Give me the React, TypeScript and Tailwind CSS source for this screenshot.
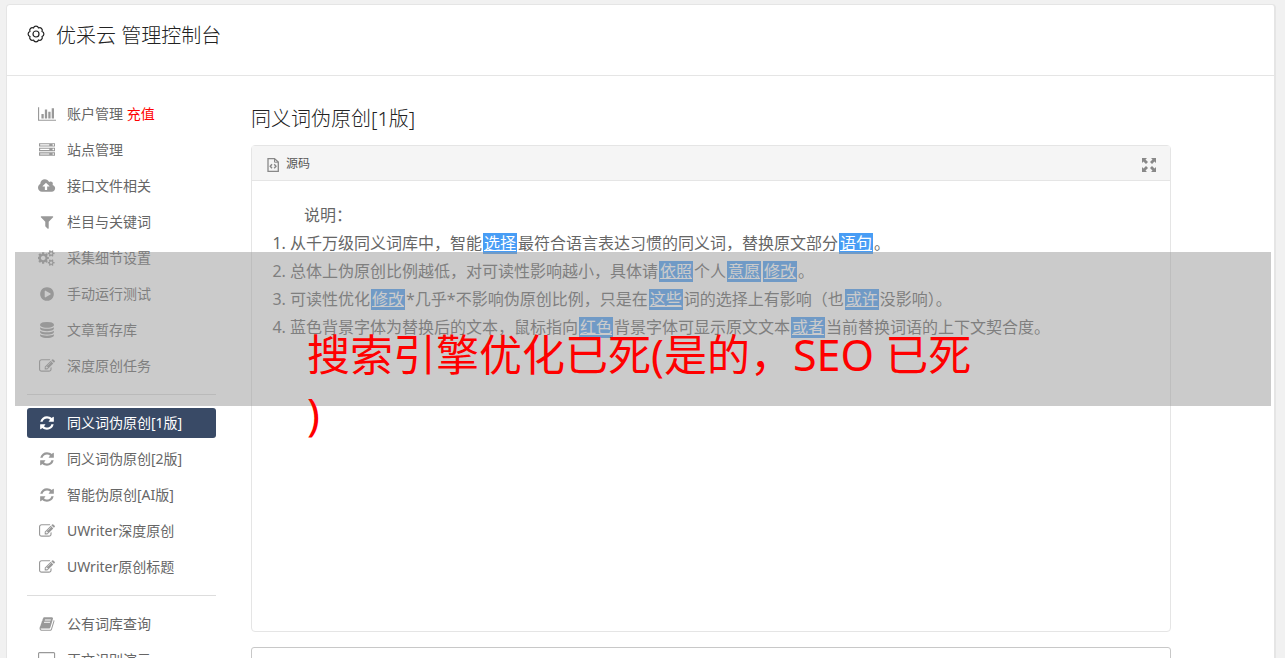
import type { ReactNode } from 'react';

// [viewBox width, path] on a 1792 unit high grid
const ICONS = {
  chart: [2048, 'M640 896v512h-256v-512h256zm384-512v1024h-256v-1024h256zm1024 1152v128h-2048v-1536h128v1408h1920zm-640-896v768h-256v-768h256zm384-384v1152h-256v-1152h256z'],
  server: [1792, 'M128 1408h1024v-128h-1024v128zm0-512h1024v-128h-1024v128zm1568 448q0-40-28-68t-68-28-68 28-28 68 28 68 68 28 68-28 28-68zm-1568-960h1024v-128h-1024v128zm1568 448q0-40-28-68t-68-28-68 28-28 68 28 68 68 28 68-28 28-68zm0-512q0-40-28-68t-68-28-68 28-28 68 28 68 68 28 68-28 28-68zm96 832v384h-1792v-384h1792zm0-512v384h-1792v-384h1792zm0-512v384h-1792v-384h1792z'],
  cloud: [1920, 'M1280 928q0-14-9-23l-352-352q-9-9-23-9t-23 9l-351 351q-10 12-10 24 0 14 9 23t23 9h224v352q0 13 9.5 22.5t22.5 9.5h192q13 0 22.5-9.5t9.5-22.5v-352h224q13 0 22.5-9.5t9.5-22.5zm640 224q0 159-112.5 271.5t-271.5 112.5h-1088q-185 0-316.5-131.5t-131.5-316.5q0-130 70-240t188-165q-2-30-2-43 0-212 150-362t362-150q156 0 285.5 87t188.5 231q71-62 166-62 106 0 181 75t75 181q0 76-41 138 130 31 213.5 135.5t83.5 238.5z'],
  filter: [1792, 'M1595 295q17 41-14 70l-493 493v742q0 42-39 59-13 5-25 5-27 0-45-19l-256-256q-19-19-19-45v-486l-493-493q-31-29-14-70 17-39 59-39h1280q42 0 59 39z'],
  cogs: [1920, 'M832 896q0-106-75-181t-181-75-181 75-75 181 75 181 181 75 181-75 75-181zm768 512q0-52-38-90t-90-38-90 38-38 90q0 53 37.5 90.5t90.5 37.5 90.5-37.5 37.5-90.5zm0-1024q0-52-38-90t-90-38-90 38-38 90q0 53 37.5 90.5t90.5 37.5 90.5-37.5 37.5-90.5zm-384 421v185q0 10-7 19.5t-16 10.5l-155 24q-11 35-32 76 34 48 90 115 7 11 7 20 0 12-7 19-23 30-82.5 89.5t-78.5 59.5q-11 0-21-7l-115-90q-37 19-77 31-11 108-23 155-7 24-30 24h-186q-11 0-20-7.5t-10-17.5l-23-153q-34-10-75-31l-118 89q-7 7-20 7-11 0-21-8-144-133-144-160 0-9 7-19 10-14 41-53t47-61q-23-44-35-82l-152-24q-10-1-17-9.5t-7-19.5v-185q0-10 7-19.5t16-10.5l155-24q11-35 32-76-34-48-90-115-7-11-7-20 0-12 7-20 22-30 82-89t79-59q11 0 21 7l115 90q34-18 77-32 11-108 23-154 7-24 30-24h186q11 0 20 7.5t10 17.5l23 153q34 10 75 31l118-89q8-7 20-7 11 0 21 8 144 133 144 160 0 8-7 19-12 16-42 54t-45 60q23 48 34 82l152 23q10 2 17 10.5t7 19.5zm640 533v140q0 16-149 31-12 27-30 52 51 113 51 138 0 4-4 7-122 71-124 71-8 0-46-47t-52-68q-20 2-30 2t-30-2q-14 21-52 68t-46 47q-2 0-124-71-4-3-4-7 0-25 51-138-18-25-30-52-149-15-149-31v-140q0-16 149-31 13-29 30-52-51-113-51-138 0-4 4-7 4-2 35-20t59-34 30-16q8 0 46 46.5t52 67.5q20-2 30-2t30 2q51-71 92-112l6-2q4 0 124 70 4 3 4 7 0 25-51 138 17 23 30 52 149 15 149 31zm0-1024v140q0 16-149 31-12 27-30 52 51 113 51 138 0 4-4 7-122 71-124 71-8 0-46-47t-52-68q-20 2-30 2t-30-2q-14 21-52 68t-46 47q-2 0-124-71-4-3-4-7 0-25 51-138-18-25-30-52-149-15-149-31v-140q0-16 149-31 13-29 30-52-51-113-51-138 0-4 4-7 4-2 35-20t59-34 30-16q8 0 46 46.5t52 67.5q20-2 30-2t30 2q51-71 92-112l6-2q4 0 124 70 4 3 4 7 0 25-51 138 17 23 30 52 149 15 149 31z'],
  play: [1792, 'M896 128q209 0 385.5 103t279.5 279.5 103 385.5-103 385.5-279.5 279.5-385.5 103-385.5-103-279.5-279.5-103-385.5 103-385.5 279.5-279.5 385.5-103zm384 823q32-18 32-55t-32-55l-544-320q-31-19-64-1-32 19-32 56v640q0 37 32 56 16 8 32 8 17 0 32-9z'],
  database: [1792, 'M896 768q237 0 443-43t325-127v170q0 69-103 128t-280 93.5-385 34.5-385-34.5-280-93.5-103-128v-170q119 84 325 127t443 43zm0 768q237 0 443-43t325-127v170q0 69-103 128t-280 93.5-385 34.5-385-34.5-280-93.5-103-128v-170q119 84 325 127t443 43zm0-384q237 0 443-43t325-127v170q0 69-103 128t-280 93.5-385 34.5-385-34.5-280-93.5-103-128v-170q119 84 325 127t443 43zm0-1152q208 0 385 34.5t280 93.5 103 128v128q0 69-103 128t-280 93.5-385 34.5-385-34.5-280-93.5-103-128v-128q0-69 103-128t280-93.5 385-34.5z'],
  edit: [1792, 'M888 1184l116-116-152-152-116 116v56h96v96h56zm440-720q-16-16-33 1l-350 350q-17 17-1 33t33-1l350-350q17-17 1-33zm80 594v190q0 119-84.5 203.5t-203.5 84.5h-832q-119 0-203.5-84.5t-84.5-203.5v-832q0-119 84.5-203.5t203.5-84.5h832q63 0 117 25 15 7 18 23 3 17-9 29l-49 49q-14 14-32 8-23-6-45-6h-832q-66 0-113 47t-47 113v832q0 66 47 113t113 47h832q66 0 113-47t47-113v-126q0-13 9-22l64-64q15-15 35-7t20 29zm-96-738l288 288-672 672h-288v-288zm444 132l-92 92-288-288 92-92q28-28 68-28t68 28l152 152q28 28 28 68t-28 68z'],
  refresh: [1792, 'M1639 1056q0 5-1 7-64 268-268 434.5t-478 166.5q-146 0-282.5-55t-243.5-157l-129 129q-19 19-45 19t-45-19-19-45v-448q0-26 19-45t45-19h448q26 0 45 19t19 45-19 45l-137 137q71 66 161 102t187 36q134 0 250-65t186-179q11-17 53-117 8-23 30-23h192q13 0 22.5 9.5t9.5 22.5zm25-800v448q0 26-19 45t-45 19h-448q-26 0-45-19t-19-45 19-45l138-138q-148-137-349-137-134 0-250 65t-186 179q-11 17-53 117-8 23-30 23h-199q-13 0-22.5-9.5t-9.5-22.5v-7q65-268 270-434.5t480-166.5q146 0 284 55.5t245 156.5l130-129q19-19 45-19t45 19 19 45z'],
  book: [1792, 'M1703 478q40 57 18 129l-275 906q-19 64-76.5 107.5t-122.5 43.5h-923q-77 0-148.5-53.5t-99.5-131.5q-24-67-2-127 0-4 3-27t4-37q1-8-3-21.5t-3-19.5q2-11 8-21t16.5-23.5 16.5-23.5q23-38 45-91.5t30-91.5q3-10 .5-30t-.5-28q3-11 17-28t17-23q21-36 42-92t25-90q1-9-2.5-32t.5-28q4-13 22-30.5t22-22.5q19-26 42.5-84.5t27.5-96.5q1-8-3-25.5t-2-26.5q2-8 9-18t18-23 17-21q8-12 16.5-30.5t15-35 16-36 19.5-32 26.5-23.5 36-11.5 47.5 5.5l-1 3q38-9 51-9h761q74 0 114 56t18 130l-274 906q-36 119-71.5 153.5t-128.5 34.5h-869q-27 0-38 15-11 16-1 43 24 70 144 70h923q29 0 56-15.5t35-41.5l300-987q7-22 5-57 38 15 59 43zm-1064 2q-4 13 2 22.5t20 9.5h608q13 0 25.5-9.5t16.5-22.5l21-64q4-13-2-22.5t-20-9.5h-608q-13 0-25.5 9.5t-16.5 22.5zm-83 256q-4 13 2 22.5t20 9.5h608q13 0 25.5-9.5t16.5-22.5l21-64q4-13-2-22.5t-20-9.5h-608q-13 0-25.5 9.5t-16.5 22.5z'],
  desktop: [1920, 'M1792 992v-832q0-13-9.500-22.500t-22.500-9.500h-1600q-13 0-22.500 9.500t-9.500 22.500v832q0 13 9.500 22.500t22.500 9.500h1600q13 0 22.500-9.500t9.500-22.500zm128-832v1088q0 66-47 113t-113 47h-544q0 37 16 77.500t32 71 16 43.500q0 26-19 45t-45 19h-512q-26 0-45-19t-19-45q0-14 16-44t32-70 16-78h-544q-66 0-113-47t-47-113v-1088q0-66 47-113t113-47h1600q66 0 113 47t47 113z'],
} as const;

type IconName = keyof typeof ICONS;

interface NavItem {
  icon: IconName;
  label: string;
  extra?: string;
  active?: boolean;
}

const NAV: NavItem[][] = [
  [
    { icon: 'chart', label: '账户管理', extra: '充值' },
    { icon: 'server', label: '站点管理' },
    { icon: 'cloud', label: '接口文件相关' },
    { icon: 'filter', label: '栏目与关键词' },
    { icon: 'cogs', label: '采集细节设置' },
    { icon: 'play', label: '手动运行测试' },
    { icon: 'database', label: '文章暂存库' },
    { icon: 'edit', label: '深度原创任务' },
  ],
  [
    { icon: 'refresh', label: '同义词伪原创[1版]', active: true },
    { icon: 'refresh', label: '同义词伪原创[2版]' },
    { icon: 'refresh', label: '智能伪原创[AI版]' },
    { icon: 'edit', label: 'UWriter深度原创' },
    { icon: 'edit', label: 'UWriter原创标题' },
  ],
  [
    { icon: 'book', label: '公有词库查询' },
    { icon: 'desktop', label: '正文识别演示' },
  ],
];

function NavIcon({ name }: { name: IconName }) {
  const [width, d] = ICONS[name];
  return (
    <svg viewBox={`0 0 ${width} 1792`} className="h-4 w-auto" fill="currentColor" aria-hidden="true">
      <path d={d} />
    </svg>
  );
}

function Sidebar() {
  return (
    <nav className="w-[189px] shrink-0 pt-[23px]">
      {NAV.map((group, i) => (
        <ul
          key={i}
          className={`flex flex-col gap-1.5 ${i > 0 ? 'mt-[13px] border-t border-[#ddd] pt-[13px]' : ''}`}
        >
          {group.map((item) => (
            <li key={item.label}>
              <a
                href="#"
                className={`flex h-[30px] items-center rounded-[3px] text-sm ${
                  item.active ? 'bg-[#394a66] text-white' : 'text-[#666]'
                }`}
              >
                <span
                  className={`flex w-10 shrink-0 justify-center ${item.active ? 'text-white' : 'text-[#999]'}`}
                >
                  <NavIcon name={item.icon} />
                </span>
                <span>
                  {item.label}
                  {item.extra && <span className="text-[#f00]"> {item.extra}</span>}
                </span>
              </a>
            </li>
          ))}
        </ul>
      ))}
    </nav>
  );
}

function Word({ children }: { children: ReactNode }) {
  return (
    <a href="#" className="mx-px inline-block bg-[#489df5] px-px leading-[21px] text-white underline">
      {children}
    </a>
  );
}

function Editor() {
  return (
    <section className="flex h-[487px] flex-col rounded-[4px] border border-[#e5e5e5]">
      <div className="flex h-[35px] items-center justify-between border-b border-[#e5e5e5] bg-[#f5f5f5] px-[14px] pt-0.5">
        <button type="button" className="flex items-center gap-[7px] text-xs text-[#555]">
          <svg width="13" height="14" viewBox="0 0 13 14" fill="none" stroke="#888" className="mt-0.5" aria-hidden="true">
            <path strokeWidth="1.300" d="M2 .7h6.500L12.300 4v9.300H2z" />
            <path d="M8.500 1v3.200H12" />
            <path strokeWidth="1.400" d="M6 6.200L4.200 8.200 6 10.200M8.200 6.200l1.800 2-1.800 2" />
          </svg>
          源码
        </button>
        <button type="button" aria-label="全屏">
          <svg width="14" height="14" viewBox="0 0 14 14" fill="#888" className="mt-0.5" aria-hidden="true">
            <path d="M0 0h5L3.500 1.500 6 4 4 6 1.500 3.500 0 5zM14 0v5l-1.500-1.500L10 6 8 4l2.500-2.500L9 0zM0 14V9l1.500 1.500L4 8l2 2-2.500 2.500L5 14zM14 14H9l1.500-1.500L8 10l2-2 2.500 2.500L14 9z" />
          </svg>
        </button>
      </div>
      <div className="flex-1 px-5 pt-5 text-base leading-[28px] text-[#666]">
        <p className="indent-8">说明：</p>
        <ol className="list-decimal pl-[18px]">
          <li className="h-7">
            从千万级同义词库中，智能<Word>选择</Word>最符合语言表达习惯的同义词，替换原文部分<Word>语句</Word>。
          </li>
          <li className="h-7">
            总体上伪原创比例越低，对可读性影响越小，具体请<Word>依照</Word>个人<Word>意愿</Word>
            <Word>修改</Word>。
          </li>
          <li className="h-7">
            可读性优化<Word>修改</Word>*几乎*不影响伪原创比例，只是在<Word>这些</Word>词的选择上有影响（也
            <Word>或许</Word>没影响）。
          </li>
          <li className="h-7">
            蓝色背景字体为替换后的文本，鼠标指向<Word>红色</Word>背景字体可显示原文文本<Word>或者</Word>
            当前替换词语的上下文契合度。
          </li>
        </ol>
      </div>
    </section>
  );
}

export default function App() {
  return (
    <div className="relative h-screen overflow-hidden bg-[#f1f1f1] pt-1 pr-[9px] pl-1.5 font-['Noto_Sans','Noto_Sans_CJK_SC',sans-serif]">
      <div className="min-h-full rounded-[4px] border border-r-2 border-[#e5e5e5] bg-white">
        <header className="flex h-[71px] items-start gap-[11px] border-b border-[#e5e5e5] px-5 pt-4 text-[#222]">
          <svg width="18" height="18" viewBox="0 0 18 18" fill="none" stroke="currentColor" className="mt-1" aria-hidden="true">
            <path
              strokeWidth="1.200"
              strokeLinejoin="round"
              d="M15 6.500A2.600 2.600 0 0 1 15 11.500A2.600 2.600 0 0 1 11.500 15A2.600 2.600 0 0 1 6.500 15A2.600 2.600 0 0 1 3 11.500A2.600 2.600 0 0 1 3 6.500A2.600 2.600 0 0 1 6.500 3A2.600 2.600 0 0 1 11.500 3A2.600 2.600 0 0 1 15 6.500z"
            />
            <circle cx="9" cy="9" r="3" strokeWidth="1.200" />
          </svg>
          <h1 className="text-xl leading-[30px] font-light">优采云 管理控制台</h1>
        </header>
        <div className="flex gap-[35px] pr-[103px] pl-5">
          <Sidebar />
          <main className="min-w-0 flex-1 pt-7">
            <h2 className="mb-[11px] text-xl leading-[30px] font-light text-[#222]">同义词伪原创[1版]</h2>
            <Editor />
            <textarea
              aria-label="原文"
              className="mt-[15px] block h-[200px] w-full resize-none rounded-[3px] border border-[#c8c8c8]"
            />
          </main>
        </div>
      </div>
      {/* translucent caption band laid over the console */}
      <div className="absolute top-[252px] right-[14px] left-[15px] h-[154px] bg-[#979797]/50 pt-[73px] pl-[292px]">
        <p className="text-[43px] leading-[59px] whitespace-nowrap text-[#f00]">
          搜索引擎优化已死(是的，SEO 已死
          <br />)
        </p>
      </div>
    </div>
  );
}
